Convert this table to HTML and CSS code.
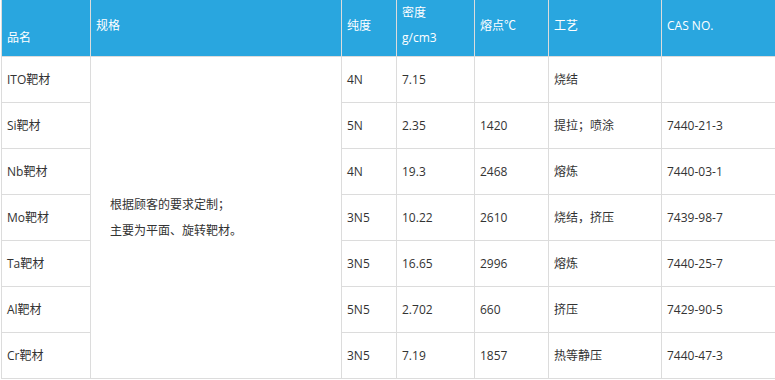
FILE: index.html
```html
<!DOCTYPE html>
<html lang="zh-CN">
<head>
<meta charset="utf-8">
<title>靶材规格</title>
<link rel="stylesheet" href="styles.css">
</head>
<body>
<div class="wrap">
<table class="spec-table">
  <colgroup>
    <col class="c-name">
    <col class="c-spec">
    <col class="c-purity">
    <col class="c-density">
    <col class="c-melt">
    <col class="c-process">
    <col class="c-cas">
  </colgroup>
  <thead>
    <tr>
      <th class="bottom">品名</th>
      <th>规格</th>
      <th>纯度</th>
      <th>密度<br>g/cm3</th>
      <th>熔点℃</th>
      <th>工艺</th>
      <th>CAS NO.</th>
    </tr>
  </thead>
  <tbody>
    <tr>
      <td>ITO靶材</td>
      <td class="spec" rowspan="7">根据顾客的要求定制；<br>主要为平面、旋转靶材。</td>
      <td>4N</td>
      <td>7.15</td>
      <td></td>
      <td>烧结</td>
      <td></td>
    </tr>
    <tr>
      <td>Si靶材</td>
      <td>5N</td>
      <td>2.35</td>
      <td>1420</td>
      <td>提拉；喷涂</td>
      <td>7440-21-3</td>
    </tr>
    <tr>
      <td>Nb靶材</td>
      <td>4N</td>
      <td>19.3</td>
      <td>2468</td>
      <td>熔炼</td>
      <td>7440-03-1</td>
    </tr>
    <tr>
      <td>Mo靶材</td>
      <td>3N5</td>
      <td>10.22</td>
      <td>2610</td>
      <td>烧结，挤压</td>
      <td>7439-98-7</td>
    </tr>
    <tr>
      <td>Ta靶材</td>
      <td>3N5</td>
      <td>16.65</td>
      <td>2996</td>
      <td>熔炼</td>
      <td>7440-25-7</td>
    </tr>
    <tr>
      <td>Al靶材</td>
      <td>5N5</td>
      <td>2.702</td>
      <td>660</td>
      <td>挤压</td>
      <td>7429-90-5</td>
    </tr>
    <tr>
      <td>Cr靶材</td>
      <td>3N5</td>
      <td>7.19</td>
      <td>1857</td>
      <td>热等静压</td>
      <td>7440-47-3</td>
    </tr>
  </tbody>
</table>
</div>
</body>
</html>
```

FILE: styles.css
```css
html, body {
  margin: 0;
  padding: 0;
  background: #fff;
}

.wrap {
  padding-left: 1px;
}

.spec-table {
  border-collapse: collapse;
  table-layout: fixed;
  width: 774px;
  font-family: "Open Sans", "Noto Sans CJK SC", sans-serif;
  font-size: 12px;
  color: #333;
}

.c-name { width: 89px; }
.c-spec { width: 251px; }
.c-purity { width: 55px; }
.c-density { width: 78px; }
.c-melt { width: 74px; }
.c-process { width: 113px; }

.spec-table th {
  background: #29a6df;
  color: #fff;
  font-weight: normal;
  text-align: left;
  vertical-align: middle;
  line-height: 25px;
  height: 50px;
  padding: 0 5px 6px;
  border: 1px solid #dcdcdc;
  border-top: none;
}

.spec-table th.bottom {
  vertical-align: bottom;
}

.spec-table td {
  height: 45px;
  padding: 0 5px;
  line-height: 20px;
  vertical-align: middle;
  border: 1px solid #dcdcdc;
}

.spec-table th:last-child,
.spec-table td:last-child {
  border-right: none;
}

.spec-table td.spec {
  padding-left: 19px;
  line-height: 26px;
}
```
